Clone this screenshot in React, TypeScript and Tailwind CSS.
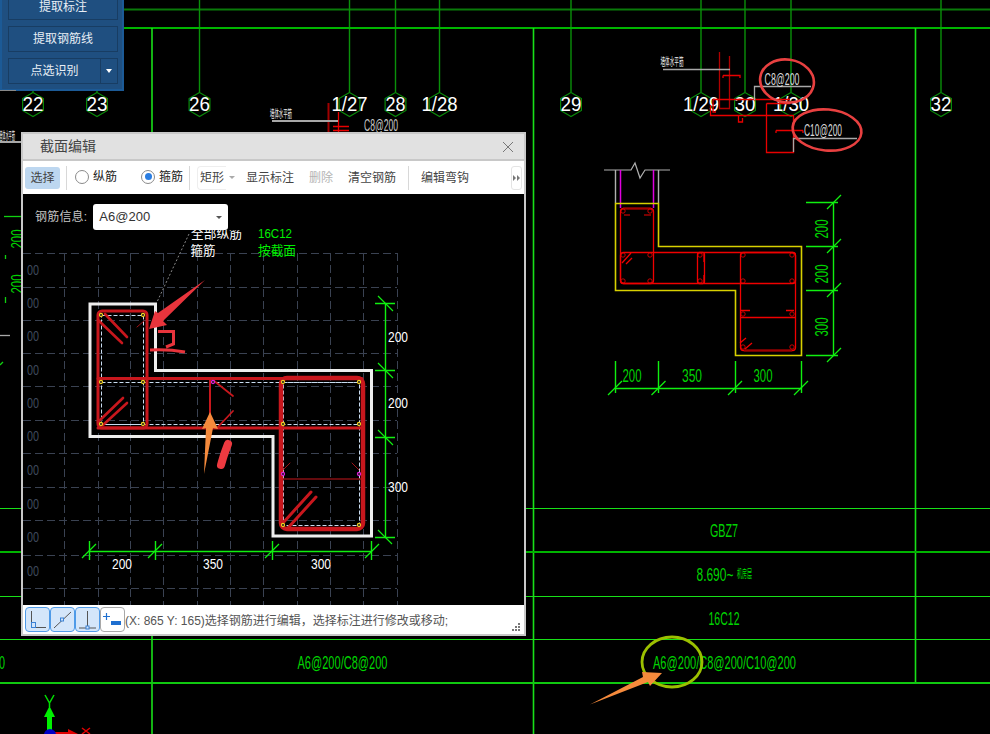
import type { ReactNode } from 'react';

const cjk = "font-['Liberation_Sans','Noto_Sans_CJK_SC',sans-serif]";
const cadFont = "'Liberation Sans','Noto Sans CJK SC',sans-serif";

const axisMarks = [
  { x: 33, label: '22', w: 21 },
  { x: 97, label: '23', w: 21 },
  { x: 199.5, label: '26', w: 21 },
  { x: 349.5, label: '1/27', w: 36 },
  { x: 395.5, label: '28', w: 20 },
  { x: 439.5, label: '1/28', w: 36 },
  { x: 571, label: '29', w: 21 },
  { x: 701, label: '1/29', w: 36 },
  { x: 745, label: '30', w: 21 },
  { x: 791, label: '1/30', w: 36 },
  { x: 941, label: '32', w: 21 },
];

const hexPoints = (cx: number, cy: number, r: number) =>
  [0, 1, 2, 3, 4, 5]
    .map((i) => {
      const a = (Math.PI / 3) * i - Math.PI / 2;
      return `${cx + r * Math.cos(a)},${cy + r * Math.sin(a)}`;
    })
    .join(' ');

type CadTextProps = {
  x: number;
  y: number;
  w: number;
  size?: number;
  fill?: string;
  children: ReactNode;
  rotate?: boolean;
};

// CAD labels are narrow and tall, so squeeze them to the measured width
const CadText = ({ x, y, w, size = 18, fill = '#00d400', children, rotate }: CadTextProps) => (
  <text
    x={x}
    y={y}
    fontSize={size}
    fill={fill}
    textLength={w}
    lengthAdjust="spacingAndGlyphs"
    textAnchor="middle"
    dominantBaseline="central"
    transform={rotate ? `rotate(-90 ${x} ${y})` : undefined}
    fontFamily={cadFont}
  >
    {children}
  </text>
);

const Tick = ({ x, y, color = '#10f010' }: { x: number; y: number; color?: string }) => (
  <line x1={x - 7} y1={y + 7} x2={x + 7} y2={y - 7} stroke={color} strokeWidth="1.2" />
);

const BackgroundDrawing = () => (
  <svg className="absolute inset-0" width="990" height="734" viewBox="0 0 990 734">
    {/* table and frame lines */}
    <line x1="0" y1="9.5" x2="990" y2="9.5" stroke="#0a7a0a" strokeWidth="2" />
    {[199.5, 349.5, 395.5, 439.5, 571, 701, 745, 791, 941, 33, 97].map((x) => (
      <line key={x} x1={x} y1="0" x2={x} y2="92" stroke="#0a900a" strokeWidth="1.4" />
    ))}
    <line x1="0" y1="28" x2="990" y2="28" stroke="#00b400" strokeWidth="2" />
    <g stroke="#18e018">
      <line x1="152" y1="28" x2="152" y2="734" strokeWidth="1.6" />
      <line x1="533.5" y1="28" x2="533.5" y2="734" strokeWidth="1.6" />
      <line x1="915.5" y1="28" x2="915.5" y2="683" strokeWidth="1.6" />
      <line x1="0" y1="508.5" x2="990" y2="508.5" />
      <line x1="0" y1="596.5" x2="990" y2="596.5" />
      <line x1="0" y1="639.5" x2="990" y2="639.5" />
    </g>
    <line x1="0" y1="552" x2="990" y2="552" stroke="#00b400" strokeWidth="2" />
    <line x1="0" y1="683" x2="990" y2="683" stroke="#10c810" strokeWidth="2" />

    {/* axis bubbles */}
    {axisMarks.map((m) => (
      <g key={m.label}>
        <polygon points={hexPoints(m.x, 104.5, 12)} fill="#000" stroke="#0a8a0a" strokeWidth="1.2" />
        <CadText x={m.x} y={104} w={m.w} size={20} fill="#fff">
          {m.label}
        </CadText>
      </g>
    ))}

    {/* rebar callouts behind the dialog */}
    <g fill="none" stroke="#e80000" strokeWidth="1.3">
      <line x1="328.5" y1="103" x2="328.5" y2="132" stroke="#a00000" strokeWidth="2" />
      <line x1="338.5" y1="112" x2="338.5" y2="132" />
      <path d="M333 126.5 H349 M333 130.5 H349" />
      <path d="M719.5 52 V108.5 H729.5 V56" stroke="#b00000" />
      <path d="M723 75.5 H740 V78 M723 75.5 V78" />
      <path d="M713 99.5 H790 M713 99.5 V112 H716 M710.5 105 V115.5 H793" />
      <path d="M738.5 115 V122 H742.5 V118" />
      <path d="M766.5 103.5 H790 M766.5 103.5 V152.5 H793.5 V115" />
      <path d="M776 130.5 H803 M776 130.5 V133 M803 130.5 V133" />
    </g>
    <g fill="none" stroke="#a8a8a8" strokeWidth="1.3">
      <path d="M272 121 H338" strokeWidth="2" />
      <path d="M0 142 H21" strokeWidth="2" />
      <path d="M663 69.5 H730" />
      <path d="M754.5 100 V86.5 H811" />
      <path d="M793.5 152 V138.5 H857" />
      <path d="M0 335.5 H10" />
    </g>
    <CadText x={281} y={114} w={22} size={11} fill="#eee">墙体水平筋</CadText>
    <CadText x={7} y={136} w={16} size={11} fill="#eee">墙体水平筋</CadText>
    <CadText x={672} y={62} w={23} size={11} fill="#eee">墙体水平筋</CadText>
    <CadText x={381} y={125} w={34} size={17} fill="#c8c8c8">C8@200</CadText>
    <CadText x={782} y={79} w={35} size={17} fill="#d8d8d8">C8@200</CadText>
    <CadText x={823} y={130} w={38} size={17} fill="#d8d8d8">C10@200</CadText>
    <CadText x={17} y={239} w={19} size={17} rotate>200</CadText>
    <CadText x={17} y={284} w={19} size={17} rotate>200</CadText>
    <g stroke="#10d010" strokeWidth="1.3">
      <path d="M4 216.5 H21" />
      <path d="M5.5 255 V259 M5.5 297 V303" />
      <path d="M0 365 L3 362" />
    </g>

    {/* section detail on the right */}
    <g fill="none">
      <path d="M604 170 H631 L635 163 L640 178 L645 170 H670" stroke="#b0b0b0" strokeWidth="1.2" />
      <path d="M615.5 170 V203 M658.5 170 V203" stroke="#b0b0b0" strokeWidth="1.4" />
      <path d="M620.5 170 V208 M653.5 170 V208" stroke="#e000e0" strokeWidth="1.5" />
      <path d="M615.5 203.5 H658.5 V246.5 H801.5 V355.5 H735.5 V290.5 H615.5 Z" stroke="#d8d000" strokeWidth="1.6" />
      <g stroke="#f00000" strokeWidth="1.3">
        <rect x="620.5" y="208.5" width="33" height="75" rx="3" />
        <rect x="620.5" y="252.5" width="175" height="31" rx="3" />
        <rect x="740.5" y="252.5" width="55" height="98" rx="3" />
        <path d="M740.5 317.5 H795" />
        <rect x="697.5" y="252.5" width="7" height="31" rx="2" />
        <path d="M704 254 V262 M704 275 V283" />
        <path d="M623 208.5 H651" strokeWidth="2" stroke="#a00000" />
        <path d="M744 350.5 H792" strokeWidth="2" stroke="#a00000" />
        <path d="M622 263 L631 253 M626 264 L632 258" />
        <path d="M740 343 L746 338 M745 349 L752 343" />
        <path d="M624 215 H630 M644 215 H651" strokeWidth="1.6" stroke="#a00000" />
        <path d="M741 310.5 H750 M786 310.5 H794" />
        {[
          [623, 211],
          [650, 211],
          [623, 255],
          [650, 255],
          [623, 281],
          [650, 281],
          [700, 255],
          [700, 281],
          [743, 255],
          [792, 255],
          [743, 281],
          [792, 281],
          [743, 314],
          [792, 314],
          [743, 347],
          [792, 347],
        ].map(([cx, cy]) => (
          <circle key={`${cx}-${cy}`} cx={cx} cy={cy} r="2.2" strokeWidth="0.8" />
        ))}
      </g>
      <g stroke="#10f010" strokeWidth="1.4">
        <path d="M833.5 202 V356 M806 202.5 H838 M806 246.5 H838 M806 290.5 H838 M806 355.5 H838" />
        <path d="M615 388.5 H802 M615.5 361 V393 M658.5 361 V393 M735.5 361 V393 M801.5 361 V393" />
      </g>
      <Tick x={834} y={202} />
      <Tick x={834} y={246} />
      <Tick x={834} y={290} />
      <Tick x={834} y={355} />
      <Tick x={615} y={388} />
      <Tick x={658.5} y={388} />
      <Tick x={735} y={388} />
      <Tick x={801} y={388} />
      <CadText x={822} y={229} w={19} rotate>200</CadText>
      <CadText x={822} y={274} w={19} rotate>200</CadText>
      <CadText x={822} y={327} w={19} rotate>300</CadText>
      <CadText x={632} y={376} w={19}>200</CadText>
      <CadText x={692} y={376} w={20}>350</CadText>
      <CadText x={763} y={376} w={19}>300</CadText>

      {/* table contents */}
      <CadText x={724} y={530} w={28} size={19}>GBZ7</CadText>
      <text
        transform="translate(696.5 574) scale(0.63 1)"
        fontSize="19"
        fill="#00d400"
        dominantBaseline="central"
        fontFamily={cadFont}
      >
        8.690~
      </text>
      <text
        transform="translate(737 574) scale(0.45 1)"
        fontSize="11"
        fill="#00e800"
        dominantBaseline="central"
        fontFamily={cadFont}
      >
        机房层
      </text>
      <CadText x={724} y={618} w={31} size={19}>16C12</CadText>
      <CadText x={342.5} y={662} w={90} size={19}>A6@200/C8@200</CadText>
      <CadText x={724.5} y={662} w={143} size={19}>A6@200/C8@200/C10@200</CadText>
      <CadText x={2} y={662} w={6} size={19}>0</CadText>

      {/* markup circles and arrow */}
      <ellipse cx="787" cy="81" rx="27" ry="21.5" stroke="#e84040" strokeWidth="2.6" transform="rotate(8 787 81)" />
      <ellipse cx="827" cy="130" rx="34.5" ry="20.5" stroke="#e84040" strokeWidth="2.6" transform="rotate(5 827 130)" />
      <ellipse cx="672" cy="662" rx="30" ry="25" stroke="#9cc000" strokeWidth="2.8" />
      <polygon points="590,704.5 643,677 642,672 662,673 650,686 648,682" fill="#f58a3c" />

      {/* ucs icon */}
      <path d="M45 695 L49.5 703 L54 695 M49.5 703 V707" stroke="#00e000" strokeWidth="1.5" />
      <path d="M49.5 714 V730" stroke="#00f000" strokeWidth="5" />
      <polygon points="49.5,706 44,717 55,717" fill="#00f000" />
      <path d="M54 733 H72" stroke="#e00000" strokeWidth="2" />
      <polygon points="68,729 78,734 68,734" fill="#e00000" />
      <path d="M82 728 L90 734 M90 728 L82 734" stroke="#e00000" strokeWidth="1.5" />
      <circle cx="50" cy="735" r="6" fill="#0000c8" />
    </g>
  </svg>
);

const TopPanel = () => (
  <div className={`absolute left-0 top-0 w-[124px] h-[91px] bg-[#1f4f80] border-2 border-t-0 border-[#1c5a96] ${cjk}`}>
    <div className="flex flex-col gap-[6px] pl-[6px] pr-[4px] -mt-[6px] text-[12px] text-[#e8eef5]">
      <div className="h-[26px] flex items-center justify-center border border-[#183d63]">提取标注</div>
      <div className="h-[26px] flex items-center justify-center border border-[#183d63]">提取钢筋线</div>
      <div className="h-[26px] flex border border-[#183d63]">
        <div className="flex-1 flex items-center justify-center border-r border-[#183d63]">点选识别</div>
        <div className="w-[16px] flex items-center justify-center">
          <span className="w-0 h-0 border-x-[3px] border-x-transparent border-t-[4px] border-t-white" />
        </div>
      </div>
    </div>
  </div>
);

const Radio = ({ checked, label }: { checked?: boolean; label: string }) => (
  <div className="flex items-center gap-[4px] -mt-[2px]">
    <span className="w-[14px] h-[14px] rounded-full border border-[#8a8a8a] bg-white flex items-center justify-center">
      {checked && <span className="w-[7px] h-[7px] rounded-full bg-[#2a7de1]" />}
    </span>
    <span className="text-[12px] text-[#222]">{label}</span>
  </div>
);

const Sep = () => <div className="w-px h-[24px] bg-[#d8d8d8]" />;

const Toolbar = () => (
  <div className="h-[35px] bg-white flex items-center text-[12px] text-[#444] border-t-2 border-[#c8c8c8]">
    <div className="ml-[2px] w-[35px] h-[22px] rounded-[3px] bg-[#bdd7f0] flex items-center justify-center">选择</div>
    <div className="ml-[6px]"><Sep /></div>
    <div className="ml-[8px]"><Radio label="纵筋" /></div>
    <div className="ml-[24px]"><Radio checked label="箍筋" /></div>
    <div className="ml-[6px]"><Sep /></div>
    <div className="ml-[7px] w-[29px] h-[24px] flex items-center pl-[2px] rounded-l-[4px] border border-r-0 border-[#eeeeee]">
      矩形
    </div>
    <span className="ml-[3px] w-0 h-0 border-x-[3px] border-x-transparent border-t-[3px] border-t-[#aaa]" />
    <div className="ml-[11px] mt-[1px]">显示标注</div>
    <div className="ml-[15px] mt-[1px] text-[#b4b4b4]">删除</div>
    <div className="ml-[15px] mt-[1px]">清空钢筋</div>
    <div className="ml-[12px]"><Sep /></div>
    <div className="ml-[12px] mt-[1px]">编辑弯钩</div>
    <div className="ml-[42px] w-[11px] h-[24px] rounded-[3px] border border-[#e4e4e4] flex items-center justify-center gap-px">
      <span className="w-0 h-0 border-y-[3px] border-y-transparent border-l-[3px] border-l-[#777]" />
      <span className="w-0 h-0 border-y-[3px] border-y-transparent border-l-[3px] border-l-[#777]" />
    </div>
  </div>
);

const SectionCanvas = () => {
  const gridX = [64, 98, 130, 163, 197, 230, 263, 297, 330, 363, 397];
  const gridY = [253, 287, 320, 353, 386, 420, 453, 487, 520, 555, 588];
  const cornerDots = [
    [101, 315], [143, 315], [101, 382], [143, 382], [101, 424], [143, 424],
    [283, 382], [359, 382], [283, 424], [359, 424], [283, 525], [359, 525],
  ];
  return (
    <svg className="absolute inset-0" width="501" height="411" viewBox="23 194 501 411">
      <g stroke="#3a4252" strokeWidth="1" strokeDasharray="8 4" shapeRendering="crispEdges">
        {gridX.map((x) => (
          <line key={x} x1={x + 0.5} y1="253" x2={x + 0.5} y2="605" />
        ))}
        {gridY.map((y) => (
          <line key={y} x1="23" y1={y + 0.5} x2="397" y2={y + 0.5} />
        ))}
      </g>
      {[270, 303, 336, 370, 403, 436, 470, 504, 537, 571].map((y) => (
        <CadText key={y} x={33} y={y} w={12} size={14} fill="#3f4a5c">00</CadText>
      ))}

      <path d="M189 234 L157 302" stroke="#888" strokeWidth="1" strokeDasharray="2 2" fill="none" />

      <path
        d="M90 304 H155.5 V370.5 H371.5 V536 H273 V436.5 H90 Z"
        fill="none"
        stroke="#eeeeee"
        strokeWidth="3"
      />

      {/* bars, dashed core line first */}
      <g fill="none" stroke="#c8dcf0" strokeWidth="1" strokeDasharray="4 2">
        <path d="M101.5 315.5 H143.5 V424.5 H101.5 Z" />
        <path d="M101.5 382.5 H359.5 M101.5 424.5 H359.5" />
        <path d="M283.5 382.5 H359.5 V525.5 H283.5 Z" />
      </g>
      <g fill="none" stroke="#c8171d" strokeLinecap="round">
        <rect x="98" y="311" width="49" height="117" rx="4" strokeWidth="3" />
        <path d="M98 378.5 H362 M98 428 H362" strokeWidth="3" />
        <rect x="281" y="378" width="82" height="151" rx="6" strokeWidth="4.5" />
        <path d="M281 428 H362" strokeWidth="2" />
        <path d="M281 479 H362" strokeWidth="1.2" />
        <path d="M210 380 V428" strokeWidth="2" />
        <path d="M98 320 L122 343 M105 314 L127 337" strokeWidth="2.6" />
        <path d="M98 422 L123 398 M103 425 L127 403" strokeWidth="2.6" />
        <path d="M213 380 L233 396 M217 428 L233 411" strokeWidth="1.8" />
        <path d="M282 524 L311 492 M287 529 L316 497" strokeWidth="3" />
        <path d="M137 327 L144 321" strokeWidth="0.8" />
        <path d="M283 470 L290 463 M359 470 L352 463" strokeWidth="0.8" />
      </g>
      {cornerDots.map(([cx, cy]) => (
        <circle key={`${cx}-${cy}`} cx={cx} cy={cy} r="1.6" fill="#222" stroke="#f0d020" strokeWidth="1.1" />
      ))}
      {[[213, 382], [283, 474], [359, 474]].map(([cx, cy]) => (
        <circle key={`${cx}-${cy}`} cx={cx} cy={cy} r="1.6" fill="#222" stroke="#e020e0" strokeWidth="1.1" />
      ))}

      {/* dimensions */}
      <g stroke="#10f010" strokeWidth="1.4">
        <path d="M385.5 303 V537 M375 303.5 H395 M375 370.5 H395 M375 437.5 H395 M375 537.5 H395" />
        <path d="M89 551.5 H372 M89.5 541 V560 M155.5 541 V560 M272.5 541 V560 M371.5 541 V560" />
      </g>
      <path d="M378 296 L393 311 M378 363 L393 378 M378 430 L393 445 M378 530 L392 544" stroke="#10f010" strokeWidth="1.2" />
      <Tick x={89} y={551} />
      <Tick x={155} y={551} />
      <Tick x={272} y={551} />
      <Tick x={372} y={551} />
      <CadText x={398} y={337} w={20} size={14} fill="#fff">200</CadText>
      <CadText x={398} y={403} w={20} size={14} fill="#fff">200</CadText>
      <CadText x={398} y={487} w={20} size={14} fill="#fff">300</CadText>
      <CadText x={122} y={564} w={20} size={14} fill="#fff">200</CadText>
      <CadText x={213} y={564} w={20} size={14} fill="#fff">350</CadText>
      <CadText x={321} y={564} w={20} size={14} fill="#fff">300</CadText>

      <CadText x={216.5} y={233} w={51} size={13} fill="#fff">全部纵筋</CadText>
      {/* the label's top is cut off in the app */}
      <rect x="185" y="220" width="62" height="10" fill="#000" />
      <CadText x={203} y={250} w={25} size={13} fill="#fff">箍筋</CadText>
      <CadText x={275} y={233} w={34} size={13} fill="#00f000">16C12</CadText>
      <CadText x={277} y={250} w={38} size={13} fill="#00f000">按截面</CadText>

      {/* markup arrows */}
      <polygon points="205,280 158,313 155,311 149,329 167,325 163,321" fill="#e8343c" />
      <path d="M158 331.5 H173.5 V344 L166 347 M150 350 Q168 349 185 352" fill="none" stroke="#e8343c" strokeWidth="3" />
      <polygon points="210,412 218,429 213,428 204,474 206,428 202,429" fill="#f58a3c" />
      <path d="M228 444 Q225 452 224 455 T221 465" fill="none" stroke="#ee3a40" strokeWidth="8" strokeLinecap="round" />
    </svg>
  );
};

const GuideButton = ({ active, children }: { active?: boolean; children: ReactNode }) => (
  <div
    className={`w-[25px] h-[25px] rounded-[4px] border flex items-center justify-center ${
      active ? 'bg-[#d4e6fa] border-[#4f9be8]' : 'bg-white border-[#a8a8a8]'
    }`}
  >
    <svg width="23" height="23" viewBox="0 0 23 23" fill="none" stroke="#555" strokeWidth="1">
      {children}
    </svg>
  </div>
);

const StatusBar = () => (
  <div className="relative flex-1 bg-white flex items-center pl-[2px] text-[12px] text-[#555]">
    <GuideButton active>
      <path d="M5.5 3 V19.5 H20" />
      <rect x="5.5" y="14.5" width="4" height="5" stroke="#3b82d6" />
    </GuideButton>
    <GuideButton active>
      <path d="M3 20 L20 4" />
      <rect x="9.5" y="10" width="3" height="3" fill="#d4e6fa" stroke="#3b82d6" />
    </GuideButton>
    <GuideButton active>
      <path d="M11.5 3 V18 M3 20 H20" />
      <rect x="10" y="18" width="3" height="3" fill="#d4e6fa" stroke="#3b82d6" />
    </GuideButton>
    <GuideButton>
      <path d="M2 8.5 H9 M5.5 5 V12" stroke="#1f6fd0" strokeWidth="1.2" />
      <rect x="10" y="13" width="10" height="4" fill="#1f6fd0" stroke="none" />
    </GuideButton>
    <span className="whitespace-nowrap mt-[2px]">{'(X: 865 Y: 165)选择钢筋进行编辑\uFF0C选择标注进行修改或移动;'}</span>
    <div className="absolute right-[4px] bottom-[3px] grid grid-cols-3 gap-px w-[8px]">
      {[0, 1, 2, 3, 4, 5, 6, 7, 8].map((i) => (
        <span key={i} className={i === 0 || i === 1 || i === 3 ? 'w-[2px] h-[2px]' : 'w-[2px] h-[2px] bg-[#777]'} />
      ))}
    </div>
  </div>
);

const Dialog = () => (
  <div className={`absolute left-[21px] top-[132px] w-[505px] h-[504px] flex flex-col border-2 border-[#c8c8c8] ${cjk}`}>
    <div className="h-[25px] bg-[#e1e1e1] flex items-center justify-between pl-[17px] pr-[11px] text-[14px] text-[#444]">
      <span>截面编辑</span>
      <svg width="10" height="10" viewBox="0 0 10 10" stroke="#777" strokeWidth="1">
        <path d="M0 0 L10 10 M10 0 L0 10" />
      </svg>
    </div>
    <Toolbar />
    <div className="relative h-[411px] bg-black">
      <SectionCanvas />
      <div className="absolute left-[12px] top-[10px] flex items-center gap-[6px]">
        <span className="text-[12px] text-[#c4c4c4] tracking-[0.2px]">钢筋信息:</span>
        <div className="w-[135px] h-[26px] bg-white rounded-[3px] flex items-center justify-between pl-[6px] pr-[6px] text-[13px] text-[#333]">
          A6@200
          <span className="w-0 h-0 border-x-[3px] border-x-transparent border-t-[3px] border-t-[#555]" />
        </div>
      </div>
    </div>
    <StatusBar />
  </div>
);

export default function App() {
  return (
    <div className="relative w-[990px] h-[734px] bg-black overflow-hidden">
      <BackgroundDrawing />
      <TopPanel />
      <div className="absolute left-0 top-[90px] w-[16px] h-px bg-[#888]" />
      <Dialog />
    </div>
  );
}
